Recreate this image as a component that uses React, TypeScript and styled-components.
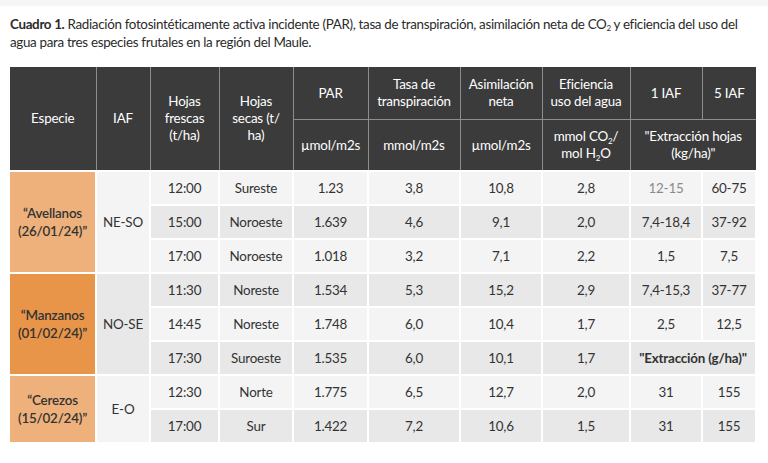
import React from "react";
import styled, {createGlobalStyle} from "styled-components";

const GlobalStyle = createGlobalStyle`
body {
  margin: 0;
  background: #ffffff;
  font-family: Lato, "Open Sans", "Liberation Sans", sans-serif;
  color: #333333;
}
`

const Page = styled.div`
  padding: 9px 10px 0 10px;
  width: 768px;
  box-sizing: border-box;
  border-top: 6px solid #f6f6f6;
`

const Caption = styled.p`
  margin: 0 0 16px 0;
  font-size: 13.4px;
  line-height: 18px;
  letter-spacing: -0.33px;
  color: #2b2b2b;
  width: 740px;
  b {
    font-weight: 700;
  }
  sub {
    font-size: 8px;
    vertical-align: -2px;
    line-height: 0;
  }
`

const Table = styled.table`
  border-collapse: collapse;
  table-layout: fixed;
  width: 746px;
  font-size: 13.4px;
  letter-spacing: -0.2px;
  sub {
    font-size: 8px;
    vertical-align: -3px;
    line-height: 0;
  }
`

const Head = styled.th<{ $h?: number }>`
  background: #3b3b3b;
  color: #ffffff;
  font-weight: 400;
  border: 1px solid #8d8d8d;
  border-top: none;
  text-align: center;
  vertical-align: middle;
  line-height: 17px;
  padding: 0 2px;
  height: ${p => p.$h ?? 50}px;
  &:first-child {
    border-left: none;
  }
  &:last-child {
    border-right: none;
  }
`

const Row = styled.tr<{ $dark?: boolean }>`
  background: ${p => (p.$dark ? "#e8e8e8" : "#f4f4f4")};
  height: 34px;
`

const Cell = styled.td<{ $muted?: boolean; $strong?: boolean }>`
  border: 2px solid #ffffff;
  text-align: center;
  vertical-align: middle;
  padding: 0;
  line-height: 18px;
  color: ${p => (p.$muted ? "#8a8a8a" : "#333333")};
  font-weight: ${p => (p.$strong ? 700 : 400)};
`

const Species = styled(Cell)<{ $tone: string }>`
  background: ${p => p.$tone};
  font-weight: 600;
  border-left: none;
  line-height: 18px;
`

const Group = styled(Cell)<{ $dark?: boolean }>`
  background: ${p => (p.$dark ? "#e8e8e8" : "#f4f4f4")};
`

type Sample = {
    time: string
    dir: string
    par: string
    tasa: string
    asim: string
    efic: string
    one?: string
    five?: string
    note?: string
    muted?: boolean
}

type Block = {
    name: string
    date: string
    iaf: string
    tone: string
    rows: Sample[]
}

const blocks: Block[] = [
    {
        name: "“Avellanos", date: "(26/01/24)”", iaf: "NE-SO", tone: "#eeb17b",
        rows: [
            {time: "12:00", dir: "Sureste", par: "1.23", tasa: "3,8", asim: "10,8", efic: "2,8", one: "12-15", five: "60-75", muted: true},
            {time: "15:00", dir: "Noroeste", par: "1.639", tasa: "4,6", asim: "9,1", efic: "2,0", one: "7,4-18,4", five: "37-92"},
            {time: "17:00", dir: "Noroeste", par: "1.018", tasa: "3,2", asim: "7,1", efic: "2,2", one: "1,5", five: "7,5"},
        ],
    },
    {
        name: "“Manzanos", date: "(01/02/24)”", iaf: "NO-SE", tone: "#e8954a",
        rows: [
            {time: "11:30", dir: "Noreste", par: "1.534", tasa: "5,3", asim: "15,2", efic: "2,9", one: "7,4-15,3", five: "37-77"},
            {time: "14:45", dir: "Noreste", par: "1.748", tasa: "6,0", asim: "10,4", efic: "1,7", one: "2,5", five: "12,5"},
            {time: "17:30", dir: "Suroeste", par: "1.535", tasa: "6,0", asim: "10,1", efic: "1,7", note: "\"Extracción (g/ha)\""},
        ],
    },
    {
        name: "“Cerezos", date: "(15/02/24)”", iaf: "E-O", tone: "#eeb17b",
        rows: [
            {time: "12:30", dir: "Norte", par: "1.775", tasa: "6,5", asim: "12,7", efic: "2,0", one: "31", five: "155"},
            {time: "17:00", dir: "Sur", par: "1.422", tasa: "7,2", asim: "10,6", efic: "1,5", one: "31", five: "155"},
        ],
    },
]

const widths = [86, 54, 69, 74, 75, 92, 82, 88, 72, 54]

export default function App() {
    let index = 0
    return (
        <Page>
            <GlobalStyle/>
            <Caption>
                <b>Cuadro 1.</b> Radiación fotosintéticamente activa incidente (PAR), tasa de transpiración, asimilación neta de CO<sub>2</sub> y eficiencia del uso del agua para tres especies frutales en la región del Maule.
            </Caption>
            <Table>
                <colgroup>
                    {widths.map((w, i) => <col key={i} style={{width: w}}/>)}
                </colgroup>
                <thead>
                <tr>
                    <Head rowSpan={2}>Especie</Head>
                    <Head rowSpan={2}>IAF</Head>
                    <Head rowSpan={2}>Hojas<br/>frescas<br/>(t/ha)</Head>
                    <Head rowSpan={2}>Hojas<br/>secas (t/<br/>ha)</Head>
                    <Head $h={52}>PAR</Head>
                    <Head $h={52}>Tasa de<br/>transpiración</Head>
                    <Head $h={52}>Asimilación<br/>neta</Head>
                    <Head $h={52}>Eficiencia<br/>uso del agua</Head>
                    <Head $h={52}>1 IAF</Head>
                    <Head $h={52}>5 IAF</Head>
                </tr>
                <tr>
                    <Head>µmol/m2s</Head>
                    <Head>mmol/m2s</Head>
                    <Head>µmol/m2s</Head>
                    <Head>mmol CO<sub>2</sub>/<br/>mol H<sub>2</sub>O</Head>
                    <Head colSpan={2}>"Extracción hojas<br/>(kg/ha)"</Head>
                </tr>
                </thead>
                <tbody>
                {blocks.map((block, b) => block.rows.map((r, i) => {
                    const dark = index++ % 2 === 1
                    return (
                        <Row key={`${b}-${i}`} $dark={dark}>
                            {i === 0 && <>
                                <Species rowSpan={block.rows.length} $tone={block.tone}>{block.name}<br/>{block.date}</Species>
                                <Group rowSpan={block.rows.length} $dark={b === 1}>{block.iaf}</Group>
                            </>}
                            <Cell>{r.time}</Cell>
                            <Cell>{r.dir}</Cell>
                            <Cell>{r.par}</Cell>
                            <Cell>{r.tasa}</Cell>
                            <Cell>{r.asim}</Cell>
                            <Cell>{r.efic}</Cell>
                            {r.note
                                ? <Cell colSpan={2} $strong>{r.note}</Cell>
                                : <>
                                    <Cell $muted={r.muted}>{r.one}</Cell>
                                    <Cell>{r.five}</Cell>
                                </>}
                        </Row>
                    )
                }))}
                </tbody>
            </Table>
        </Page>
    )
}
